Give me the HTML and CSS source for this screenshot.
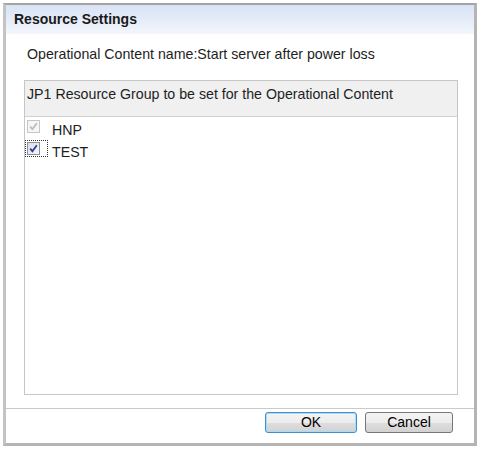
FILE: index.html
```html
<!DOCTYPE html>
<html>
<head>
<meta charset="utf-8">
<link rel="stylesheet" href="styles.css">
</head>
<body>
<div class="dialog">
  <div class="titlebar">Resource Settings</div>
  <div class="content">
    <div class="opname">Operational Content name:Start server after power loss</div>
    <div class="panel">
      <div class="panel-head">JP1 Resource Group to be set for the Operational Content</div>
      <div class="list">
        <div class="row">
          <span class="cbwrap">
            <svg class="cb" width="13" height="13" viewBox="0 0 13 13">
              <rect x="0.5" y="0.5" width="12" height="12" fill="#f6f6f6" stroke="#c6c6c6"/>
              <path d="M3.2 6.6 L5.4 9.2 L9.8 3.2" fill="none" stroke="#b9b9b9" stroke-width="1.7"/>
            </svg>
          </span>
          <span class="lbl">HNP</span>
        </div>
        <div class="row">
          <span class="cbwrap focus">
            <svg class="cb" width="13" height="13" viewBox="0 0 13 13">
              <defs>
                <linearGradient id="cbg" x1="0" y1="0" x2="1" y2="1">
                  <stop offset="0" stop-color="#d9dde6"/>
                  <stop offset="1" stop-color="#f7f8fb"/>
                </linearGradient>
              </defs>
              <rect x="0.5" y="0.5" width="12" height="12" fill="url(#cbg)" stroke="#8a8e96"/>
              <path d="M3.2 6.6 L5.4 9.2 L9.8 3.2" fill="none" stroke="#2f3f9a" stroke-width="1.8"/>
            </svg>
          </span>
          <span class="lbl">TEST</span>
        </div>
      </div>
    </div>
  </div>
  <div class="footer">
    <button class="btn btn-ok">OK</button>
    <button class="btn">Cancel</button>
  </div>
</div>
</body>
</html>
```
FILE: styles.css
```css
html, body {
  margin: 0;
  padding: 0;
  background: #ffffff;
}
body {
  font-family: "Liberation Sans", Arial, sans-serif;
  color: #1e1e1e;
}
.dialog {
  box-sizing: border-box;
  margin: 3px 0 0 3px;
  width: 474px;
  height: 443px;
  border-top: 2px solid #a4a4a4;
  border-left: 3px solid #c3c3c3;
  border-right: 3px solid #b4b4b4;
  border-bottom: 3px solid #b4b4b4;
  display: flex;
  flex-direction: column;
  background: #ffffff;
}
.titlebar {
  height: 29px;
  line-height: 29px;
  padding-left: 8px;
  font-size: 14px;
  font-weight: bold;
  color: #1a1a1a;
  background: linear-gradient(#d8e3f5, #f3f6fc);
}
.content {
  flex: 1;
  padding: 12px 0 0 18px;
}
.opname {
  font-size: 14.2px;
  line-height: 16px;
  margin-left: 3px;
  white-space: nowrap;
}
.panel {
  box-sizing: border-box;
  margin-top: 18px;
  width: 434px;
  height: 315px;
  border: 1px solid #c6c6c6;
}
.panel-head {
  box-sizing: border-box;
  height: 36px;
  padding: 5px 0 0 2px;
  font-size: 14.2px;
  line-height: 16px;
  background: #f0f0f0;
  border-bottom: 1px solid #d0d0d0;
  white-space: nowrap;
}
.list {
  padding-top: 1px;
}
.row {
  display: flex;
  align-items: flex-start;
  height: 22px;
}
.cbwrap {
  display: block;
  border: 1px solid transparent;
  padding: 1px 7px 1px 1px;
  height: 13px;
}
.cbwrap.focus {
  border: 1px dotted #333333;
}
.cb {
  display: block;
}
.lbl {
  font-size: 14.2px;
  line-height: 16px;
  padding-top: 4px;
  margin-left: 4px;
}
.footer {
  box-sizing: border-box;
  height: 35px;
  border-top: 1px solid #cacaca;
  display: flex;
  justify-content: flex-end;
  align-items: flex-start;
  gap: 8px;
  padding: 3px 21px 0 0;
}
.btn {
  box-sizing: border-box;
  width: 88px;
  height: 21px;
  margin: 0;
  padding: 0;
  font-family: "Liberation Sans", Arial, sans-serif;
  font-size: 14px;
  line-height: 19px;
  color: #000000;
  border: 1px solid #767676;
  border-radius: 3px;
  background: linear-gradient(#f4f4f4, #ececec 50%, #dedede 51%, #d2d2d2);
}
.btn-ok {
  width: 92px;
  border-color: #3d8fd0;
  box-shadow: inset 0 0 0 1px #a9dbf6;
}
```
